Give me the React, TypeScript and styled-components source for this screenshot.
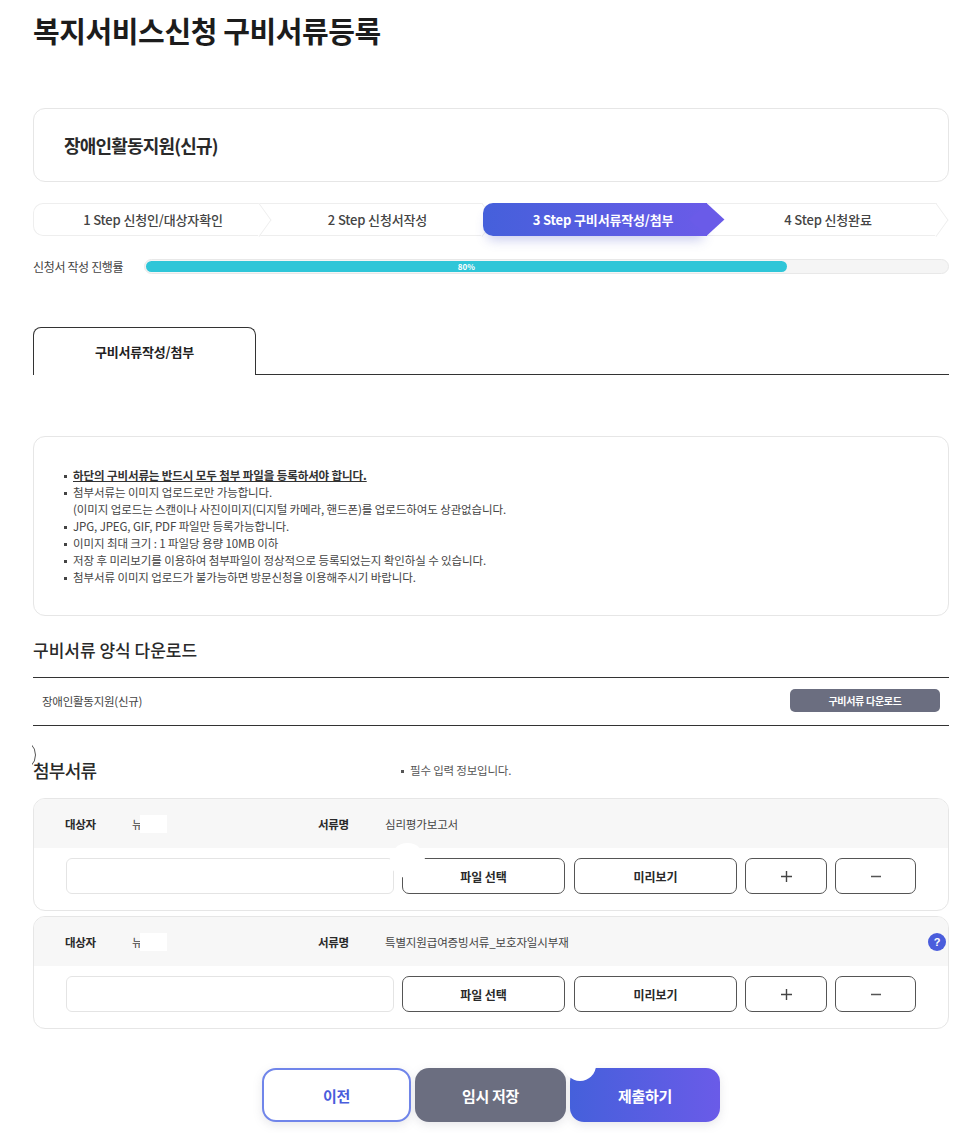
import React from 'react';
import styled, { createGlobalStyle } from 'styled-components';

const GlobalStyle = createGlobalStyle`
    html, body {
        margin: 0;
        padding: 0;
        background: #fff;
    }
    body {
        font-family: "Noto Sans CJK KR", "Noto Sans", sans-serif;
        color: #333;
        overflow: hidden;
    }
    * {
        box-sizing: border-box;
    }
`;

const Page = styled.div`
    position: relative;
    width: 966px;
    height: 1133px;
    padding: 0 17px 0 33px;
    overflow: hidden;
`;

const Title = styled.h1`
    margin: 0;
    padding-top: 9px;
    height: 108px;
    font-size: 29px;
    line-height: 42px;
    font-weight: 700;
    letter-spacing: -0.4px;
    color: #1c1c1c;
`;

const ServiceCard = styled.div`
    height: 74px;
    padding: 0 30px;
    display: flex;
    align-items: center;
    border: 1px solid #e6e6e6;
    border-radius: 12px;
    font-size: 18px;
    font-weight: 700;
    letter-spacing: -0.8px;
    color: #2a2a2a;
`;

const Steps = styled.div`
    display: flex;
    margin-top: 21px;
    height: 33px;
`;

const Step = styled.div<{ $width: number; $order: number; $active?: boolean; $first?: boolean }>`
    position: relative;
    flex: 0 0 ${(p) => p.$width}px;
    display: flex;
    align-items: center;
    justify-content: center;
    padding-left: ${(p) => (p.$active ? '16px' : '12px')};
    font-size: 13px;
    font-weight: ${(p) => (p.$active ? 700 : 500)};
    letter-spacing: -0.15px;
    color: ${(p) => (p.$active ? '#fff' : '#444')};
    background: ${(p) => (p.$active ? 'linear-gradient(90deg, #4560db, #6a5be8)' : '#fff')};
    border: ${(p) => (p.$active ? '0' : '1px solid #eeeeee')};
    border-left-width: ${(p) => (p.$first ? '1px' : '0')};
    border-right: 0;
    border-radius: ${(p) => (p.$first || p.$active ? '10px 0 0 10px' : '0')};
    z-index: ${(p) => p.$order};
    box-shadow: ${(p) => (p.$active ? '0 8px 12px -4px rgba(80, 90, 200, 0.3)' : 'none')};

    &::after {
        content: '';
        position: absolute;
        top: ${(p) => (p.$active ? '4.8px' : '3.8px')};
        right: -11.7px;
        width: 23.4px;
        height: 23.4px;
        background: ${(p) => (p.$active ? '#6a5be8' : '#fff')};
        border-top: ${(p) => (p.$active ? '0' : '1px solid #eeeeee')};
        border-right: ${(p) => (p.$active ? '0' : '1px solid #eeeeee')};
        transform: scaleX(${(p) => (p.$active ? 1.09 : 0.72)}) rotate(45deg);
        z-index: -1;
    }
`;

const ProgressRow = styled.div`
    display: flex;
    align-items: center;
    margin-top: 23px;
    height: 15px;
`;

const ProgressLabel = styled.div`
    width: 111px;
    font-size: 12px;
    letter-spacing: -0.35px;
    color: #444;
    white-space: nowrap;
`;

const ProgressTrack = styled.div`
    flex: 1;
    height: 15px;
    padding: 1px;
    border: 1px solid #e8e8e8;
    border-radius: 8px;
    background: #f5f5f5;
`;

const ProgressFill = styled.div`
    height: 100%;
    display: flex;
    align-items: center;
    justify-content: center;
    border-radius: 7px;
    background: #2fc6d8;
    font-size: 8px;
    font-weight: 700;
    color: #fff;
`;

const TabBar = styled.div`
    display: flex;
    margin-top: 53px;
    height: 48px;
    border-bottom: 1px solid #333;
`;

const Tab = styled.div`
    width: 223px;
    height: 48px;
    display: flex;
    align-items: center;
    justify-content: center;
    border: 1px solid #333;
    border-bottom: 0;
    border-radius: 8px 8px 0 0;
    background: #fff;
    font-size: 13px;
    font-weight: 700;
    letter-spacing: -0.2px;
    color: #222;
`;

const Notice = styled.ul`
    margin: 61px 0 0;
    height: 180px;
    padding: 30px 0 0 30px;
    list-style: none;
    border: 1px solid #e6e6e6;
    border-radius: 12px;
    font-size: 11.5px;
    line-height: 17px;
    letter-spacing: -0.1px;
    color: #444;
`;

const NoticeItem = styled.li<{ $strong?: boolean }>`
    position: relative;
    padding-left: 9px;
    font-weight: ${(p) => (p.$strong ? 700 : 400)};
    text-decoration: ${(p) => (p.$strong ? 'underline' : 'none')};
    color: ${(p) => (p.$strong ? '#333' : '#444')};

    &::before {
        content: '';
        position: absolute;
        left: 0;
        top: 8px;
        width: 3px;
        height: 3px;
        background: #444;
    }
`;

const SectionTitle = styled.h2`
    margin: 21px 0 0;
    height: 26px;
    font-size: 17px;
    line-height: 26px;
    font-weight: 500;
    letter-spacing: 0;
    color: #2a2a2a;
`;

const DownloadRow = styled.div`
    display: flex;
    align-items: center;
    justify-content: space-between;
    margin-top: 14px;
    height: 49px;
    padding: 0 9px 2px;
    border-top: 1px solid #333;
    border-bottom: 1px solid #333;
    font-size: 11.5px;
    letter-spacing: -0.25px;
    color: #444;
`;

const DownloadButton = styled.button`
    width: 150px;
    height: 23px;
    padding: 0;
    border: 0;
    border-radius: 5px;
    background: #6b6e80;
    font-family: inherit;
    font-size: 10px;
    font-weight: 700;
    letter-spacing: -0.3px;
    color: #fff;
`;

const AttachHeader = styled.div`
    position: relative;
    display: flex;
    align-items: center;
    margin-top: 29px;
    height: 30px;
    margin-bottom: 13px;
`;

const AttachTitle = styled.h2`
    margin: 0;
    width: 367px;
    font-size: 18px;
    font-weight: 500;
    letter-spacing: -0.7px;
    color: #2a2a2a;
`;

const RequiredNote = styled.div`
    position: relative;
    padding-left: 10px;
    font-size: 11.5px;
    letter-spacing: -0.2px;
    color: #555;

    &::before {
        content: '';
        position: absolute;
        left: 1px;
        top: 8px;
        width: 3px;
        height: 3px;
        background: #555;
    }
`;

const ArcMark = styled.span`
    position: absolute;
    left: -1px;
    top: -12px;
    width: 4px;
    height: 22px;
    overflow: hidden;

    &::before {
        content: '';
        position: absolute;
        right: 0;
        top: -4px;
        width: 30px;
        height: 30px;
        border: 1px solid #555;
        border-radius: 50%;
    }
`;

const DocCard = styled.div`
    position: relative;
    height: 113px;
    margin-bottom: 5px;
    border: 1px solid #e6e6e6;
    border-radius: 12px;
    overflow: hidden;
`;

const DocHeader = styled.div`
    position: relative;
    height: 49px;
    display: flex;
    align-items: center;
    padding-left: 31px;
    background: #f7f7f7;
    font-size: 11.5px;
    letter-spacing: -0.15px;
    color: #444;
`;

const FieldLabel = styled.span<{ $width: number }>`
    width: ${(p) => p.$width}px;
    font-weight: 700;
    letter-spacing: -0.35px;
    color: #2a2a2a;
`;

const Person = styled.span`
    display: flex;
    align-items: center;
    width: 186px;
`;

const MaskedName = styled.span`
    width: 27px;
    height: 18px;
    margin-left: -2px;
    background: #fff;
`;

const HelpBadge = styled.span`
    position: absolute;
    right: 2px;
    top: 16px;
    width: 18px;
    height: 18px;
    display: flex;
    align-items: center;
    justify-content: center;
    border-radius: 50%;
    background: #4a5ddc;
    font-family: "Liberation Sans", sans-serif;
    font-size: 11px;
    font-weight: 700;
    color: #fff;
`;

const DocBody = styled.div`
    display: flex;
    align-items: center;
    height: 62px;
    padding: 0 0 6px 32px;
`;

const FileInput = styled.div`
    width: 328px;
    height: 36px;
    margin-right: 8px;
    border: 1px solid #e4e4e4;
    border-radius: 6px;
    background: #fff;
`;

const OutlineButton = styled.button<{ $width: number; $gap: number }>`
    width: ${(p) => p.$width}px;
    height: 36px;
    margin-right: ${(p) => p.$gap}px;
    padding: 0;
    display: flex;
    align-items: center;
    justify-content: center;
    border: 1.5px solid #555;
    border-radius: 7px;
    background: #fff;
    font-family: inherit;
    font-size: 12px;
    font-weight: 700;
    letter-spacing: -0.1px;
    color: #2a2a2a;
`;

const RoundPatch = styled.span`
    position: absolute;
    left: 390px;
    top: 843px;
    width: 35px;
    height: 35px;
    border-radius: 50%;
    background: #fff;
`;

const Footer = styled.div`
    display: flex;
    justify-content: center;
    gap: 4px;
    margin-top: 39px;
`;

const FooterButton = styled.button<{ $kind: 'prev' | 'save' | 'submit' }>`
    width: ${(p) => (p.$kind === 'prev' ? '149px' : p.$kind === 'save' ? '151px' : '150px')};
    height: 54px;
    padding: 0;
    border: ${(p) => (p.$kind === 'prev' ? '2px solid #7085ea' : '0')};
    border-radius: 14px;
    background: ${(p) =>
        p.$kind === 'prev'
            ? '#fff'
            : p.$kind === 'save'
              ? '#6b6e80'
              : 'linear-gradient(90deg, #4560db, #6a5be8)'};
    box-shadow: 0 3px 10px rgba(120, 120, 140, 0.18);
    font-family: inherit;
    font-size: 15px;
    font-weight: 700;
    letter-spacing: -0.3px;
    color: ${(p) => (p.$kind === 'prev' ? '#4a5ddc' : '#fff')};
`;

const FooterPatch = styled.span`
    position: absolute;
    left: 564px;
    top: 1049px;
    width: 32px;
    height: 32px;
    border-radius: 50%;
    background: #fff;
`;

interface DocRowProps {
    readonly docName: string;
    readonly help?: boolean;
}

const DocRow: React.FC<DocRowProps> = ({ docName, help }) => (
    <DocCard>
        <DocHeader>
            <FieldLabel $width={67}>대상자</FieldLabel>
            <Person>
                뉴<MaskedName />
            </Person>
            <FieldLabel $width={67}>서류명</FieldLabel>
            {docName}
            {help && <HelpBadge>?</HelpBadge>}
        </DocHeader>
        <DocBody>
            <FileInput />
            <OutlineButton $width={163} $gap={9}>파일 선택</OutlineButton>
            <OutlineButton $width={163} $gap={8}>미리보기</OutlineButton>
            <OutlineButton $width={82} $gap={8}>
                <svg width="13" height="13" viewBox="0 0 13 13">
                    <path d="M6.5 1v11M1 6.5h11" stroke="#444" strokeWidth="1.4" fill="none" />
                </svg>
            </OutlineButton>
            <OutlineButton $width={81} $gap={0}>
                <svg width="12" height="13" viewBox="0 0 12 13">
                    <path d="M1 6.5h10" stroke="#555" strokeWidth="1.6" fill="none" />
                </svg>
            </OutlineButton>
        </DocBody>
    </DocCard>
);

export default function App(): React.ReactElement {
    return (
        <Page>
            <GlobalStyle />
            <Title>복지서비스신청 구비서류등록</Title>
            <ServiceCard>장애인활동지원(신규)</ServiceCard>

            <Steps>
                <Step $width={227} $order={2} $first>1 Step 신청인/대상자확인</Step>
                <Step $width={223} $order={1}>2 Step 신청서작성</Step>
                <Step $width={224} $order={3} $active>3 Step 구비서류작성/첨부</Step>
                <Step $width={230} $order={0}>4 Step 신청완료</Step>
            </Steps>

            <ProgressRow>
                <ProgressLabel>신청서 작성 진행률</ProgressLabel>
                <ProgressTrack>
                    <ProgressFill style={{ width: '80%' }}>80%</ProgressFill>
                </ProgressTrack>
            </ProgressRow>

            <TabBar>
                <Tab>구비서류작성/첨부</Tab>
            </TabBar>

            <Notice>
                <NoticeItem $strong>하단의 구비서류는 반드시 모두 첨부 파일을 등록하셔야 합니다.</NoticeItem>
                <NoticeItem>
                    첨부서류는 이미지 업로드로만 가능합니다.
                    <br />
                    (이미지 업로드는 스캔이나 사진이미지(디지털 카메라, 핸드폰)를 업로드하여도 상관없습니다.
                </NoticeItem>
                <NoticeItem>JPG, JPEG, GIF, PDF 파일만 등록가능합니다.</NoticeItem>
                <NoticeItem>이미지 최대 크기 : 1 파일당 용량 10MB 이하</NoticeItem>
                <NoticeItem>저장 후 미리보기를 이용하여 첨부파일이 정상적으로 등록되었는지 확인하실 수 있습니다.</NoticeItem>
                <NoticeItem>첨부서류 이미지 업로드가 불가능하면 방문신청을 이용해주시기 바랍니다.</NoticeItem>
            </Notice>

            <SectionTitle>구비서류 양식 다운로드</SectionTitle>
            <DownloadRow>
                장애인활동지원(신규)
                <DownloadButton>구비서류 다운로드</DownloadButton>
            </DownloadRow>

            <AttachHeader>
                <ArcMark />
                <AttachTitle>첨부서류</AttachTitle>
                <RequiredNote>필수 입력 정보입니다.</RequiredNote>
            </AttachHeader>

            <DocRow docName="심리평가보고서" />
            <DocRow docName="특별지원급여증빙서류_보호자일시부재" help />
            <RoundPatch />

            <Footer>
                <FooterButton $kind="prev">이전</FooterButton>
                <FooterButton $kind="save">임시 저장</FooterButton>
                <FooterButton $kind="submit">제출하기</FooterButton>
            </Footer>
            <FooterPatch />
        </Page>
    );
}
